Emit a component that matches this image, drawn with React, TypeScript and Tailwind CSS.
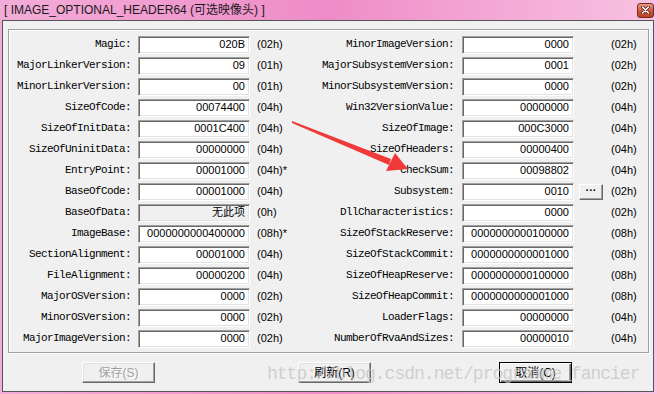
import React from "react";

type Field = { name: string; value: string; size: string; disabled?: boolean; more?: boolean };

const leftFields: Field[] = [
  { name: "Magic", value: "020B", size: "(02h)" },
  { name: "MajorLinkerVersion", value: "09", size: "(01h)" },
  { name: "MinorLinkerVersion", value: "00", size: "(01h)" },
  { name: "SizeOfCode", value: "00074400", size: "(04h)" },
  { name: "SizeOfInitData", value: "0001C400", size: "(04h)" },
  { name: "SizeOfUninitData", value: "00000000", size: "(04h)" },
  { name: "EntryPoint", value: "00001000", size: "(04h)*" },
  { name: "BaseOfCode", value: "00001000", size: "(04h)" },
  { name: "BaseOfData", value: "无此项", size: "(0h)", disabled: true },
  { name: "ImageBase", value: "0000000000400000", size: "(08h)*" },
  { name: "SectionAlignment", value: "00001000", size: "(04h)" },
  { name: "FileAlignment", value: "00000200", size: "(04h)" },
  { name: "MajorOSVersion", value: "0000", size: "(02h)" },
  { name: "MinorOSVersion", value: "0000", size: "(02h)" },
  { name: "MajorImageVersion", value: "0000", size: "(02h)" },
];

const rightFields: Field[] = [
  { name: "MinorImageVersion", value: "0000", size: "(02h)" },
  { name: "MajorSubsystemVersion", value: "0001", size: "(02h)" },
  { name: "MinorSubsystemVersion", value: "0000", size: "(02h)" },
  { name: "Win32VersionValue", value: "00000000", size: "(04h)" },
  { name: "SizeOfImage", value: "000C3000", size: "(04h)" },
  { name: "SizeOfHeaders", value: "00000400", size: "(04h)" },
  { name: "CheckSum", value: "00098802", size: "(04h)" },
  { name: "Subsystem", value: "0010", size: "(02h)", more: true },
  { name: "DllCharacteristics", value: "0000", size: "(02h)" },
  { name: "SizeOfStackReserve", value: "0000000000100000", size: "(08h)" },
  { name: "SizeOfStackCommit", value: "0000000000001000", size: "(08h)" },
  { name: "SizeOfHeapReserve", value: "0000000000100000", size: "(08h)" },
  { name: "SizeOfHeapCommit", value: "0000000000001000", size: "(08h)" },
  { name: "LoaderFlags", value: "00000000", size: "(04h)" },
  { name: "NumberOfRvaAndSizes", value: "00000010", size: "(04h)" },
];

function Label({ text, width }: { text: string; width: string }) {
  // right aligned; long names spill out to the left like the dialog does
  return (
    <div className={`${width} shrink-0 flex justify-end`}>
      <span className="font-['Liberation_Mono',monospace] text-[11px] tracking-[-0.6px] text-black whitespace-nowrap">
        {text}:
      </span>
    </div>
  );
}

function EditBox({ value, disabled }: { value: string; disabled?: boolean }) {
  return (
    <div
      className={`w-[112px] h-[18px] shrink-0 flex items-center justify-end pr-[4px] border border-t-[#a0a0a0] border-l-[#a0a0a0] border-b-white border-r-white shadow-[inset_1px_1px_0_#696969,inset_-1px_-1px_0_#e3e3e3] font-['Liberation_Sans','Noto_Sans_CJK_SC',sans-serif] text-[11px] leading-none text-black ${
        disabled ? "bg-[#f0f0f0]" : "bg-white"
      }`}
    >
      {value}
    </div>
  );
}

function Button({ label, disabled, isDefault }: { label: string; disabled?: boolean; isDefault?: boolean }) {
  return (
    <div
      className={`w-[73px] h-[21px] shrink-0 flex items-center justify-center bg-[#f0f0f0] font-['Liberation_Sans','Noto_Sans_CJK_SC',sans-serif] text-[12px] ${
        isDefault
          ? "border border-black shadow-[inset_1px_1px_0_#ffffff,inset_-1px_-1px_0_#696969,inset_-2px_-2px_0_#a0a0a0]"
          : "border border-t-white border-l-white border-b-[#696969] border-r-[#696969] shadow-[inset_-1px_-1px_0_#a0a0a0,inset_1px_1px_0_#e3e3e3]"
      } ${disabled ? "text-[#a0a0a0] [text-shadow:1px_1px_0_#ffffff]" : "text-black"}`}
    >
      {label}
    </div>
  );
}

export default function App() {
  return (
    <div className="relative w-[657px] h-[394px] overflow-hidden bg-gradient-to-r from-[#f3acd7] via-[#ee8cc8] to-[#f8c2e2]">
      {/* title bar */}
      <div className="h-[20px] flex items-center justify-between pl-[4px] pr-[3px]">
        <span className="font-['Liberation_Sans','Noto_Sans_CJK_SC',sans-serif] text-[12px] text-[#1b1b1b] whitespace-nowrap">
          [ IMAGE_OPTIONAL_HEADER64 (可选映像头) ]
        </span>
        <div className="w-[17px] h-[15px] flex items-center justify-center rounded-[3px] border border-[#7a2a1c] bg-gradient-to-b from-[#e79a84] via-[#cf5a3f] to-[#b8402a]">
          <svg width="9" height="8" viewBox="0 0 9 8">
            <path d="M1.5 1 L7.5 7 M7.5 1 L1.5 7" stroke="#4a1a10" strokeWidth="3" strokeLinecap="round" />
            <path d="M1.5 1 L7.5 7 M7.5 1 L1.5 7" stroke="#ffffff" strokeWidth="1.6" strokeLinecap="round" />
          </svg>
        </div>
      </div>

      {/* window body */}
      <div className="ml-[2px] mr-[3px] h-[372px] border border-[#555555] bg-[#f0f0f0]">
        <div className="ml-[5px] mt-[8px] w-[641px] border border-[#a0a0a0] shadow-[inset_1px_1px_0_#ffffff,1px_1px_0_#ffffff] pt-[4px] pb-[3px]">
          {leftFields.map((l, i) => {
            const r = rightFields[i];
            return (
              <div key={l.name} className="h-[21px] flex items-center">
                <Label text={l.name} width="w-[122px]" />
                <div className="ml-[7px]">
                  <EditBox value={l.value} disabled={l.disabled} />
                </div>
                <div className="ml-[7px] w-[76px] shrink-0 font-['Liberation_Sans',sans-serif] text-[11px] text-black">
                  {l.size}
                </div>
                <Label text={r.name} width="w-[121px]" />
                <div className="ml-[8px]">
                  <EditBox value={r.value} />
                </div>
                <div className="ml-[5px] w-[24px] shrink-0">
                  {r.more && (
                    <div className="w-[24px] h-[16px] flex items-center justify-center bg-[#f0f0f0] border border-t-white border-l-white border-b-[#696969] border-r-[#696969] shadow-[inset_-1px_-1px_0_#a0a0a0] font-['Liberation_Sans',sans-serif] text-[11px] font-bold leading-none pb-[3px]">
                      ···
                    </div>
                  )}
                </div>
                <div className="ml-[8px] font-['Liberation_Sans',sans-serif] text-[11px] text-black">{r.size}</div>
              </div>
            );
          })}
        </div>

        <div className="mt-[9px] flex">
          <div className="ml-[79px]">
            <Button label="保存(S)" disabled />
          </div>
          <div className="ml-[143px]">
            <Button label="刷新(R)" />
          </div>
          <div className="ml-[128px]">
            <Button label="取消(C)" isDefault />
          </div>
        </div>
      </div>

      {/* watermark */}
      <div className="absolute left-[267px] top-[361px] font-['Liberation_Mono',monospace] text-[18px] tracking-[-1px] text-[#c4c4c4]/75 whitespace-nowrap pointer-events-none">
        http://blog.csdn.net/programme_fancier
      </div>

      {/* red annotation arrow */}
      <svg className="absolute left-0 top-0 pointer-events-none" width="657" height="394" viewBox="0 0 657 394">
        <polygon points="292,121 391,159 389,165 292,123" fill="#f03a3a" />
        <polygon points="408,169 386,171 395,153" fill="#f03a3a" />
      </svg>
    </div>
  );
}
